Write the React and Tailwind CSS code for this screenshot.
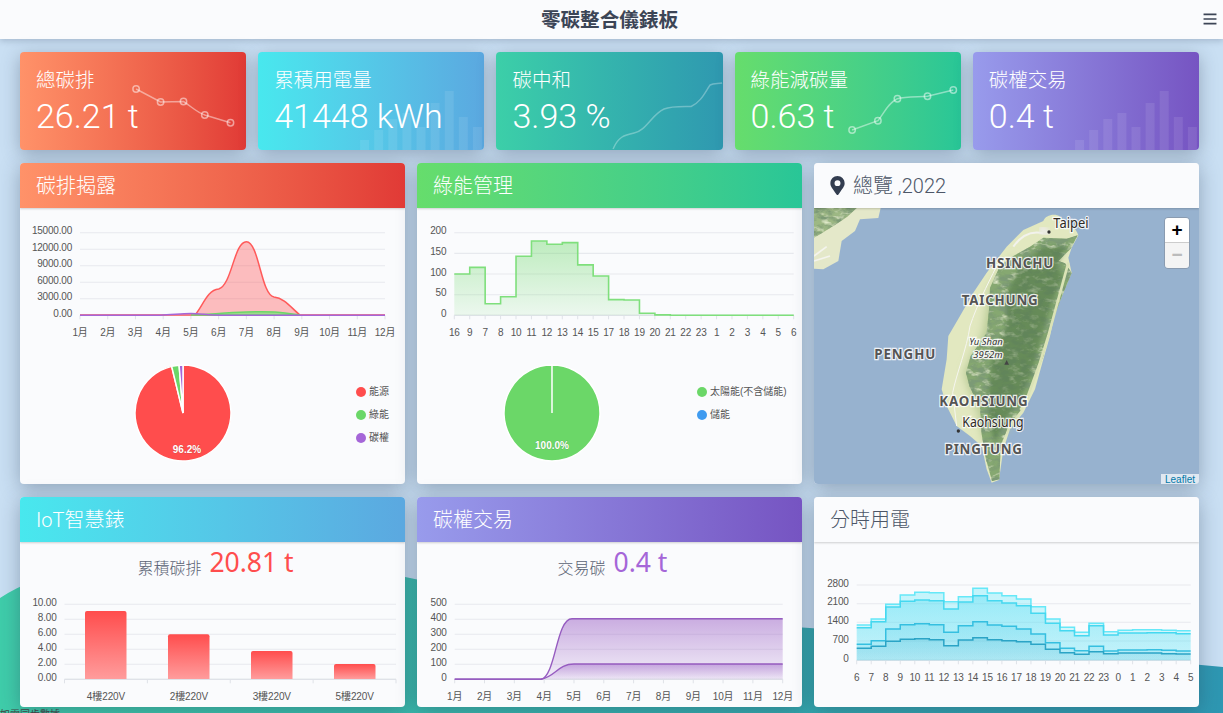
const MONTHS = ["1月", "2月", "3月", "4月", "5月", "6月", "7月", "8月", "9月", "10月", "11月", "12月"];
const SANS = "'Liberation Sans','Noto Sans CJK TC',sans-serif";

const RED = "bg-gradient-to-r from-[#ff9269] to-[#e13a36]";
const BLUE = "bg-gradient-to-r from-[#48e8ee] to-[#5ba8e0]";
const TEAL = "bg-gradient-to-r from-[#3ccfa8] to-[#2f98b0]";
const GREEN = "bg-gradient-to-r from-[#66dd6c] to-[#28c697]";
const PURPLE = "bg-gradient-to-r from-[#989bec] to-[#7654c2]";

const Spark = ({ children }) => (
    <svg viewBox="0 0 226 98" className="absolute inset-0 w-full h-full">
        {children}
    </svg>
);

const Bars = () => {
    const tops = [88, 78, 67, 61, 75, 51, 39, 65, 75];
    return (
        <Spark>
            {tops.map((t, i) => (
                <rect key={i} x={102 + i * 14.1} y={t} width="9" height={98 - t} fill="#fff" opacity="0.09" />
            ))}
        </Spark>
    );
};

const DotLine = ({ d, points }) => (
    <Spark>
        <path d={d} fill="none" stroke="#fff" strokeOpacity="0.45" strokeWidth="1.5" />
        {points.map(([x, y], i) => (
            <circle key={i} cx={x} cy={y} r="3.2" fill="none" stroke="#fff" strokeOpacity="0.5" strokeWidth="1.5" />
        ))}
    </Spark>
);

const StatCard = ({ color, title, value, children }) => (
    <div className={`relative h-[98px] rounded overflow-hidden text-white shadow-[0_4px_18px_rgba(40,55,80,0.34)] [font-family:Roboto,'Noto_Sans_CJK_TC',sans-serif] ${color}`}>
        {children}
        <div className="relative pl-[16px] pt-[16px]">
            <div className="text-[19.5px] leading-[26px] font-light">{title}</div>
            <div className="text-[34px] leading-[44px] font-light">{value}</div>
        </div>
    </div>
);

const Panel = ({ color, title, dark, icon, className, children }) => (
    <div className={`flex flex-col rounded overflow-hidden bg-[#fafbfd] shadow-[0_4px_20px_rgba(40,55,80,0.36)] ${className}`}>
        <div className={`h-[45px] shrink-0 flex items-center pl-4 text-[20px] font-light shadow-[0_1px_2px_rgba(0,0,0,0.18)] z-10 [font-family:Roboto,'Noto_Sans_CJK_TC',sans-serif] ${color} ${dark ? "text-[#4d5768] bg-[#fafbfd]" : "text-white"}`}>
            {icon}
            {title}
        </div>
        {children}
    </div>
);

const Grid = ({ x0, x1, rows, labels, labelY, base }) => {
    const n = labels.length - 1;
    return (
        <g style={{ fontFamily: SANS, letterSpacing: "-0.2px" }} fontSize="10" fill="#555">
            {rows.map(([y, t]) => (
                <g key={t}>
                    <line x1={x0} x2={x1} y1={y} y2={y} stroke="#e7e9ee" strokeWidth="1.1" />
                    <text x={x0 - 8} y={y + 1.5} textAnchor="end">{t}</text>
                </g>
            ))}
            <line x1={x0} x2={x1} y1={base} y2={base} stroke="#dfe2e8" strokeWidth="1.2" />
            {labels.map((l, i) => {
                const x = x0 + ((x1 - x0) * i) / n;
                return (
                    <g key={i}>
                        <line x1={x} x2={x} y1={base} y2={base + 4} stroke="#dfe2e8" />
                        <text x={x} y={labelY} textAnchor="middle">{l}</text>
                    </g>
                );
            })}
        </g>
    );
};

const Pie = ({ slices, label, labelY, labelX }) => {
    const r = 48;
    const at = (f) => [50 + r * Math.sin(f * 2 * Math.PI), 50 - r * Math.cos(f * 2 * Math.PI)];
    let from = 0;
    return (
        <svg width="100" height="100" className="shrink-0">
            <circle cx="50" cy="50" r={r} fill={slices[0][1]} />
            {slices.map(([v, c]) => {
                const [a, b] = at(from);
                from += v;
                const [e, f] = at(from);
                return (
                    <path key={c} d={`M50 50 L${a} ${b} A${r} ${r} 0 ${v > 0.5 ? 1 : 0} 1 ${e} ${f} Z`} fill={c} stroke="#fff" strokeWidth="1.5" />
                );
            })}
            <text x={labelX} y={labelY} textAnchor="middle" fontSize="10" fontWeight="700" fill="#fff" stroke="#00000022" strokeWidth="1" paintOrder="stroke" style={{ fontFamily: SANS }}>{label}</text>
        </svg>
    );
};

const Legend = ({ items, className }) => (
    <div className={`flex flex-col pt-[17px] ${className}`}>
        {items.map(([c, t]) => (
            <div key={t} className="h-[23px] flex items-center gap-[3px] text-[10px] text-[#555] [font-family:'Liberation_Sans','Noto_Sans_CJK_TC',sans-serif]">
                <span className={`w-[10px] h-[10px] rounded-full ${c}`} />
                {t}
            </div>
        ))}
    </div>
);

const CarbonChart = () => (
    <svg viewBox="20 208 385 137" width="385" height="137" className="shrink-0">
        <Grid x0={80} x1={385} base={315.3} labelY={336} labels={MONTHS}
            rows={[[232.7, "15000.00"], [249.2, "12000.00"], [265.7, "9000.00"], [282.2, "6000.00"], [298.8, "3000.00"], [315.3, "0.00"]]} />
        <path d="M80 315 L195 315 C203 306 207 290 218.7 289 C232 285 234 241.7 246.4 241.7 C259 241.7 261 295 274 297 C285 298 292 309 300 315 L385 315 Z" fill="#ff4d4d" fillOpacity="0.36" stroke="#ff5a5a" strokeWidth="1.5" />
        <path d="M191 315 C205 315 225 312.5 246 312 C262 311.5 275 311.5 285 313 L300 315 Z" fill="#9fd98a" stroke="#6bd768" strokeWidth="1.5" />
        <path d="M80 315.2 L160 315.2 C172 315 180 313.5 191 313.5 C200 313.5 208 315 220 315.2 L385 315.2" fill="none" stroke="#a566d8" strokeWidth="1.5" />
    </svg>
);

const SOLAR = [100, 116, 28, 45, 143, 180, 172, 176, 122, 95, 38, 37, 5, 1, 0, 0, 0, 0, 0, 0, 0, 0];
const SOLAR_LABELS = [16, 9, 7, 8, 10, 11, 12, 13, 14, 15, 17, 18, 19, 20, 21, 22, 23, 1, 2, 3, 4, 5, 6];

const stepPath = (vals, x0, dx, toY) =>
    vals.map((v, i) => `${i === 0 ? "M" : "L"}${x0 + i * dx} ${toY(v)} L${x0 + (i + 1) * dx} ${toY(v)}`).join(" ");

const SolarChart = () => {
    const line = stepPath(SOLAR, 454.3, 15.43, (v) => 315.3 - v * 0.413);
    return (
        <svg viewBox="417 208 385 137" width="385" height="137" className="shrink-0">
            <defs>
                <linearGradient id="solar" x1="0" y1="0" x2="0" y2="1">
                    <stop offset="0" stopColor="#6bd768" stopOpacity="0.42" />
                    <stop offset="1" stopColor="#6bd768" stopOpacity="0.1" />
                </linearGradient>
            </defs>
            <Grid x0={454.3} x1={793.7} base={315.3} labelY={336} labels={SOLAR_LABELS}
                rows={[[232.7, "200"], [253.4, "150"], [274, "100"], [294.7, "50"], [315.3, "0"]]} />
            <path d={`${line} L793.7 315.3 L454.3 315.3 Z`} fill="url(#solar)" />
            <path d={line} fill="none" stroke="#7fdf7c" strokeWidth="1.6" />
        </svg>
    );
};

const MeterChart = () => {
    const bars = [[85, 611], [168, 634.3], [251, 651], [334, 664]];
    return (
        <svg viewBox="20 587 385 120" width="385" height="120" className="shrink-0">
            <defs>
                <linearGradient id="bar" x1="0" y1="0" x2="0" y2="1">
                    <stop offset="0" stopColor="#ff4d4d" />
                    <stop offset="1" stopColor="#ff9c9c" />
                </linearGradient>
            </defs>
            <Grid x0={64.5} x1={396} base={679.3} labelY={-100} labels={["", "", "", "", ""]}
                rows={[[604.3, "10.00"], [619.3, "8.00"], [634.3, "6.00"], [649.3, "4.00"], [664.3, "2.00"], [679.3, "0.00"]]} />
            {bars.map(([x, y]) => (
                <path key={x} d={`M${x} 679 V${y + 2} Q${x} ${y} ${x + 2} ${y} H${x + 39.5} Q${x + 41.5} ${y} ${x + 41.5} ${y + 2} V679 Z`} fill="url(#bar)" />
            ))}
            {["4樓220V", "2樓220V", "3樓220V", "5樓220V"].map((t, i) => (
                <text key={t} x={106 + i * 82.9} y="700" textAnchor="middle" fontSize="10" letterSpacing="-0.1" fill="#555" style={{ fontFamily: SANS }}>{t}</text>
            ))}
        </svg>
    );
};

const TradeChart = () => {
    const curve = (top) => `M454.7 679.3 L541 679.3 C${top === 618.7 ? "556 676 556 618.7 572 618.7" : "555 677 558 664 574 664"} L782.7 ${top}`;
    return (
        <svg viewBox="417 587 385 120" width="385" height="120" className="shrink-0">
            <defs>
                <linearGradient id="tradeA" x1="0" y1="0" x2="0" y2="1">
                    <stop offset="0" stopColor="#9a5fc4" stopOpacity="0.5" />
                    <stop offset="1" stopColor="#9a5fc4" stopOpacity="0.08" />
                </linearGradient>
                <linearGradient id="tradeB" x1="0" y1="0" x2="0" y2="1">
                    <stop offset="0" stopColor="#9a5fc4" stopOpacity="0.45" />
                    <stop offset="1" stopColor="#9a5fc4" stopOpacity="0.05" />
                </linearGradient>
            </defs>
            <Grid x0={454.7} x1={782.7} base={679.3} labelY={700} labels={MONTHS}
                rows={[[604.3, "500"], [619.3, "400"], [634.3, "300"], [649.3, "200"], [664.3, "100"], [679.3, "0"]]} />
            <path d={`${curve(618.7)} V679.3 Z`} fill="url(#tradeA)" />
            <path d={`${curve(664)} V679.3 Z`} fill="url(#tradeB)" />
            <path d={curve(618.7)} fill="none" stroke="#965cc0" strokeWidth="1.4" />
            <path d={curve(664)} fill="none" stroke="#965cc0" strokeWidth="1.4" />
        </svg>
    );
};

// y values read off the reference, in 3x crop pixels
const HOURLY = [
    ["#66e8f8", 0.3, [408, 390, 346, 318, 310, 311, 338, 323, 298, 312, 320, 330, 353, 390, 415, 430, 403, 428, 424, 422, 422, 424, 425]],
    ["#45d8f0", 0.28, [416, 398, 354, 337, 333, 335, 360, 339, 320, 335, 342, 350, 373, 403, 425, 440, 410, 438, 432, 432, 431, 431, 434]],
    ["#35bfe0", 0.2, [466, 455, 420, 407, 404, 407, 430, 410, 398, 408, 412, 420, 435, 461, 478, 485, 472, 486, 483, 483, 482, 484, 486]],
    ["#2ba4c6", 0.22, [478, 472, 457, 451, 449, 452, 470, 453, 446, 452, 455, 458, 466, 481, 491, 496, 488, 494, 492, 492, 492, 494, 495]],
];
const HOURS = [6, 7, 8, 9, 10, 11, 12, 13, 14, 15, 16, 17, 18, 19, 20, 21, 22, 23, 0, 1, 2, 3, 4, 5];

const HourlyChart = () => (
    <svg viewBox="814 543 385 164" width="385" height="164" className="shrink-0">
        <defs>
            {HOURLY.map(([c, o], i) => (
                <linearGradient key={c} id={`hourly${i}`} gradientUnits="userSpaceOnUse" x1="0" y1="590" x2="0" y2="661">
                    <stop offset="0" stopColor={c} stopOpacity={o + 0.08} />
                    <stop offset="1" stopColor={c} stopOpacity={o - 0.12} />
                </linearGradient>
            ))}
        </defs>
        <Grid x0={856.7} x1={1190.7} base={661.3} labelY={682} labels={HOURS}
            rows={[[586, "2800"], [604.7, "2100"], [623.3, "1400"], [642, "700"], [661.3, "0"]]} />
        {HOURLY.map(([c, o, zs], i) => {
            const line = stepPath(zs, 856.7, 14.52, (z) => 490 + z / 3);
            return (
                <g key={c}>
                    <path d={`${line} V661.3 H856.7 Z`} fill={`url(#hourly${i})`} />
                    <path d={line} fill="none" stroke={c} strokeWidth="1.5" />
                </g>
            );
        })}
    </svg>
);

const TAIWAN = "M700 185 C705 168 735 160 750 172 C770 190 800 205 805 228 L785 265 L775 295 L785 340 L760 400 L735 460 L720 530 L700 600 L675 690 L640 760 L600 810 L580 870 L567 962 L545 970 L530 930 L515 860 L480 830 L440 800 L410 740 L395 690 L410 600 L415 530 L450 470 L490 400 L530 340 L590 262 L640 212 Z";
const MOUNTAIN = "M660 262 L700 235 L770 238 L803 228 L782 268 L745 305 L765 312 L785 340 L752 420 L725 490 L700 590 L665 680 L630 755 L595 800 L572 860 L568 960 L546 965 L528 900 L515 825 L510 745 L478 680 L468 640 L482 590 L530 520 L538 440 L540 385 L570 320 L610 290 Z";
const RIDGE = "M700 262 L770 262 L740 320 L760 350 L725 430 L695 530 L665 640 L625 730 L585 780 L555 850 L540 800 L535 700 L545 600 L590 500 L590 400 L630 320 Z";

const MapLabel = ({ x, y, w, size, children, weight = 700, fill = "#555", italic, squeeze }) => (
    <text x={x} y={y} fontSize={size} fontWeight={weight} fontStyle={italic ? "italic" : "normal"} fill={fill} stroke="#fff" strokeWidth="7" strokeOpacity="0.85" paintOrder="stroke" textLength={w} lengthAdjust={squeeze ? "spacingAndGlyphs" : "spacing"} style={{ fontFamily: "'Noto Sans',sans-serif" }}>
        {children}
    </text>
);

const TaiwanMap = () => (
    <div className="relative h-[276px] bg-[#97b2cf] overflow-hidden">
        <svg viewBox="12 146 1155 828" className="w-full h-full block">
            <defs>
                {/* hillshade: darkens and lightens whatever shape it is put on */}
                <filter id="relief" x="0" y="0" width="100%" height="100%">
                    <feTurbulence type="fractalNoise" baseFrequency="0.03 0.055" numOctaves="4" seed="7" result="n1" />
                    <feColorMatrix in="n1" values="0 0 0 0 0.2  0 0 0 0 0.32  0 0 0 0 0.18  3.4 0 0 0 -1.35" result="dark" />
                    <feComposite in="dark" in2="SourceGraphic" operator="in" result="darkClip" />
                    <feTurbulence type="fractalNoise" baseFrequency="0.035 0.06" numOctaves="3" seed="21" result="n2" />
                    <feColorMatrix in="n2" values="0 0 0 0 0.78  0 0 0 0 0.85  0 0 0 0 0.62  3 0 0 0 -1.55" result="light" />
                    <feComposite in="light" in2="SourceGraphic" operator="in" result="lightClip" />
                    <feMerge>
                        <feMergeNode in="SourceGraphic" />
                        <feMergeNode in="lightClip" />
                        <feMergeNode in="darkClip" />
                    </feMerge>
                </filter>
                <filter id="soft"><feGaussianBlur stdDeviation="6" /></filter>
                <filter id="softer"><feGaussianBlur stdDeviation="2" /></filter>
                <filter id="wide"><feGaussianBlur stdDeviation="14" /></filter>
            </defs>
            <path d="M12 146 H212 L205 176 L150 180 L135 215 L95 245 L85 305 L40 330 L12 328 Z" fill="#e4e8c9" filter="url(#softer)" />
            <path d="M12 146 H140 L112 172 L70 200 L30 225 L12 235 Z" fill="#9db884" filter="url(#relief)" />
            <path d="M12 290 L50 262 M12 305 L60 290" stroke="#f4f4ee" strokeWidth="5" fill="none" filter="url(#softer)" />
            <path d={TAIWAN} fill="#e2e8c0" filter="url(#softer)" />
            <path d="M610 290 L540 385 L520 520 L462 640 L478 690 L505 760 L525 850 L600 800 L700 500 Z" fill="#b4c892" filter="url(#wide)" />
            <path d={MOUNTAIN} fill="#86a871" filter="url(#relief)" />
            <path d={RIDGE} fill="#4d7246" fillOpacity="0.55" filter="url(#soft)" />
            <path d="M775 310 L745 420 L715 530 L690 610 L650 720 L632 752" stroke="#dbe3b6" strokeWidth="8" fill="none" filter="url(#softer)" />
            <path d="M610 262 C640 220 670 215 700 222" stroke="#f2f2ec" strokeWidth="6" fill="none" filter="url(#softer)" />
            <path d="M715 225 L690 205" stroke="#ecebe4" strokeWidth="24" fill="none" filter="url(#soft)" />
            <path d="M560 320 C530 380 500 440 480 500 C470 570 440 640 428 700 L440 800" stroke="#f6f6f0" strokeWidth="3" fill="none" />
            <circle cx="717" cy="218" r="5" fill="#333" />
            <circle cx="445" cy="815" r="5" fill="#333" />
            <path d="M590 602 L597 616 H583 Z" fill="#444" />
            <MapLabel x={730} y={207} w={106} size={42} weight={400} fill="#2f2a26" squeeze>Taipei</MapLabel>
            <MapLabel x={528} y={325} w={202} size={40}>HSINCHU</MapLabel>
            <MapLabel x={455} y={436} w={228} size={40}>TAICHUNG</MapLabel>
            <MapLabel x={193} y={600} w={183} size={40}>PENGHU</MapLabel>
            <MapLabel x={478} y={557} w={100} size={24} weight={400} fill="#333" italic squeeze>Yu Shan</MapLabel>
            <MapLabel x={490} y={595} w={88} size={24} weight={400} fill="#333" italic squeeze>3952m</MapLabel>
            <MapLabel x={388} y={740} w={265} size={40}>KAOHSIUNG</MapLabel>
            <MapLabel x={457} y={804} w={184} size={42} weight={400} fill="#2f2a26" squeeze>Kaohsiung</MapLabel>
            <MapLabel x={404} y={884} w={232} size={40}>PINGTUNG</MapLabel>
        </svg>
        <div className="absolute top-[9px] right-[9px] w-[26px] rounded border border-[#8a9bb0] overflow-hidden [font-family:'Liberation_Sans',sans-serif]">
            <div className="h-[25px] flex items-center justify-center bg-white text-black font-bold text-[19px] border-b border-[#ccc]">+</div>
            <div className="h-[25px] flex items-center justify-center bg-[#f4f4f4] text-[#bbb] font-bold text-[19px]">−</div>
        </div>
        <div className="absolute right-0 bottom-0 h-[10px] px-[4px] flex items-center bg-white/70 text-[#0078a8] text-[10px] [font-family:'Liberation_Sans',sans-serif]">Leaflet</div>
    </div>
);

const Headline = ({ label, value, color }) => (
    <div className="h-[45px] shrink-0 flex items-center justify-center gap-2 pl-[6px] text-[#5a6374]">
        <span className="text-[16px] font-light pt-[6px]">{label}</span>
        <span className={`text-[26.5px] leading-none pb-[5px] ${color}`}>{value}</span>
    </div>
);

const App = () => {
    return (
        <div className="relative w-[1223px] h-[713px] overflow-hidden bg-[#c9dff3] [font-family:'Noto_Sans','Noto_Sans_CJK_TC',sans-serif]">
            <svg viewBox="0 0 1223 713" className="absolute inset-0 w-full h-full">
                <defs>
                    <linearGradient id="wave" x1="0" y1="0" x2="1" y2="0">
                        <stop offset="0" stopColor="#3fcdaa" />
                        <stop offset="1" stopColor="#2e97b2" />
                    </linearGradient>
                </defs>
                <path d="M0 598 C70 552 230 540 410 578 C560 610 700 620 810 628 C960 640 1090 655 1223 667 V713 H0 Z" fill="url(#wave)" />
            </svg>
            <div className="absolute left-0 top-[708px] text-[10px] leading-[12px] text-[#444]">如需同步數據</div>

            <div className="relative">
                <header className="relative h-[39px] flex items-center justify-center pr-[4px] bg-[#fafbfd] shadow-[0_2px_6px_rgba(40,55,80,0.22)]">
                    <h1 className="text-[19.6px] font-bold text-[#3c4556]">零碳整合儀錶板</h1>
                    <svg viewBox="0 0 14 13" className="absolute right-[6px] top-[13px] w-[14px] h-[12px]">
                        <path d="M0 1.5 H14 M0 6.5 H14 M0 11.5 H14" stroke="#3c4556" strokeWidth="1.8" />
                    </svg>
                </header>

                <div className="pl-5 pr-6 pt-[13px] flex flex-col gap-[13px]">
                    <div className="grid grid-cols-5 gap-3">
                        <StatCard color={RED} title="總碳排" value="26.21 t">
                            <DotLine d="M116 37 L140.5 50 L163.4 49.5 C172 55 176 60 184.7 63 L210.4 70.7"
                                points={[[116, 37], [140.5, 50], [163.4, 49.5], [184.7, 63], [210.4, 70.7]]} />
                        </StatCard>
                        <StatCard color={BLUE} title="累積用電量" value="41448 kWh">
                            <Bars />
                        </StatCard>
                        <StatCard color={TEAL} title="碳中和" value="3.93 %">
                            <Spark>
                                <path d="M117 97 C122 85 128 83 138 81 C150 79 156 62 168 57 C175 54 185 54.5 195 54.5 C205 50 209 40 214 33 C218 31 222 32 226 31" fill="none" stroke="#fff" strokeOpacity="0.3" strokeWidth="1.5" />
                            </Spark>
                        </StatCard>
                        <StatCard color={GREEN} title="綠能減碳量" value="0.63 t">
                            <DotLine d="M117 78 L142.8 68.7 C150 60 152 52 162.3 46.7 C170 44.5 182 45 192.4 44.3 L218.2 38"
                                points={[[117, 78], [142.8, 68.7], [162.3, 46.7], [192.4, 44.3], [218.2, 38]]} />
                        </StatCard>
                        <StatCard color={PURPLE} title="碳權交易" value="0.4 t">
                            <Bars />
                        </StatCard>
                    </div>

                    <div className="grid grid-cols-3 gap-3">
                        <Panel color={RED} title="碳排揭露" className="h-[321px]">
                            <CarbonChart />
                            <div className="flex pt-[18px] pl-[113px]">
                                <Pie slices={[[0.962, "#ff4d4d"], [0.025, "#6bd768"], [0.013, "#a566d8"]]} label="96.2%" labelX="54" labelY="90" />
                                <Legend className="ml-[123px]" items={[["bg-[#ff4d4d]", "能源"], ["bg-[#6bd768]", "綠能"], ["bg-[#a566d8]", "碳權"]]} />
                            </div>
                        </Panel>
                        <Panel color={GREEN} title="綠能管理" className="h-[321px]">
                            <SolarChart />
                            <div className="flex pt-[18px] pl-[85px]">
                                <Pie slices={[[0.9999, "#6bd768"]]} label="100.0%" labelX="50" labelY="86" />
                                <Legend className="ml-[95px]" items={[["bg-[#6bd768]", "太陽能(不含儲能)"], ["bg-[#3f9bf0]", "儲能"]]} />
                            </div>
                        </Panel>
                        <Panel dark title="總覽 ,2022" className="h-[321px]" icon={
                            <svg viewBox="0 0 384 512" className="w-[15px] h-[19px] mr-[8px] fill-[#333d50]">
                                <path d="M172 502C27 291 0 269 0 192 0 86 86 0 192 0s192 86 192 192c0 77-27 99-172 310-10 14-30 14-40 0zm20-230a80 80 0 1 0 0-160 80 80 0 0 0 0 160z" />
                            </svg>
                        }>
                            <TaiwanMap />
                        </Panel>
                    </div>

                    <div className="grid grid-cols-3 gap-3">
                        <Panel color={BLUE} title="IoT智慧錶" className="h-[210px]">
                            <Headline label="累積碳排" value="20.81 t" color="text-[#ff4d4d]" />
                            <MeterChart />
                        </Panel>
                        <Panel color={PURPLE} title="碳權交易" className="h-[210px]">
                            <Headline label="交易碳" value="0.4 t" color="text-[#a566d8]" />
                            <TradeChart />
                        </Panel>
                        <Panel dark title="分時用電" className="h-[210px]">
                            <HourlyChart />
                        </Panel>
                    </div>
                </div>
            </div>
        </div>
    );
};

export default App;
